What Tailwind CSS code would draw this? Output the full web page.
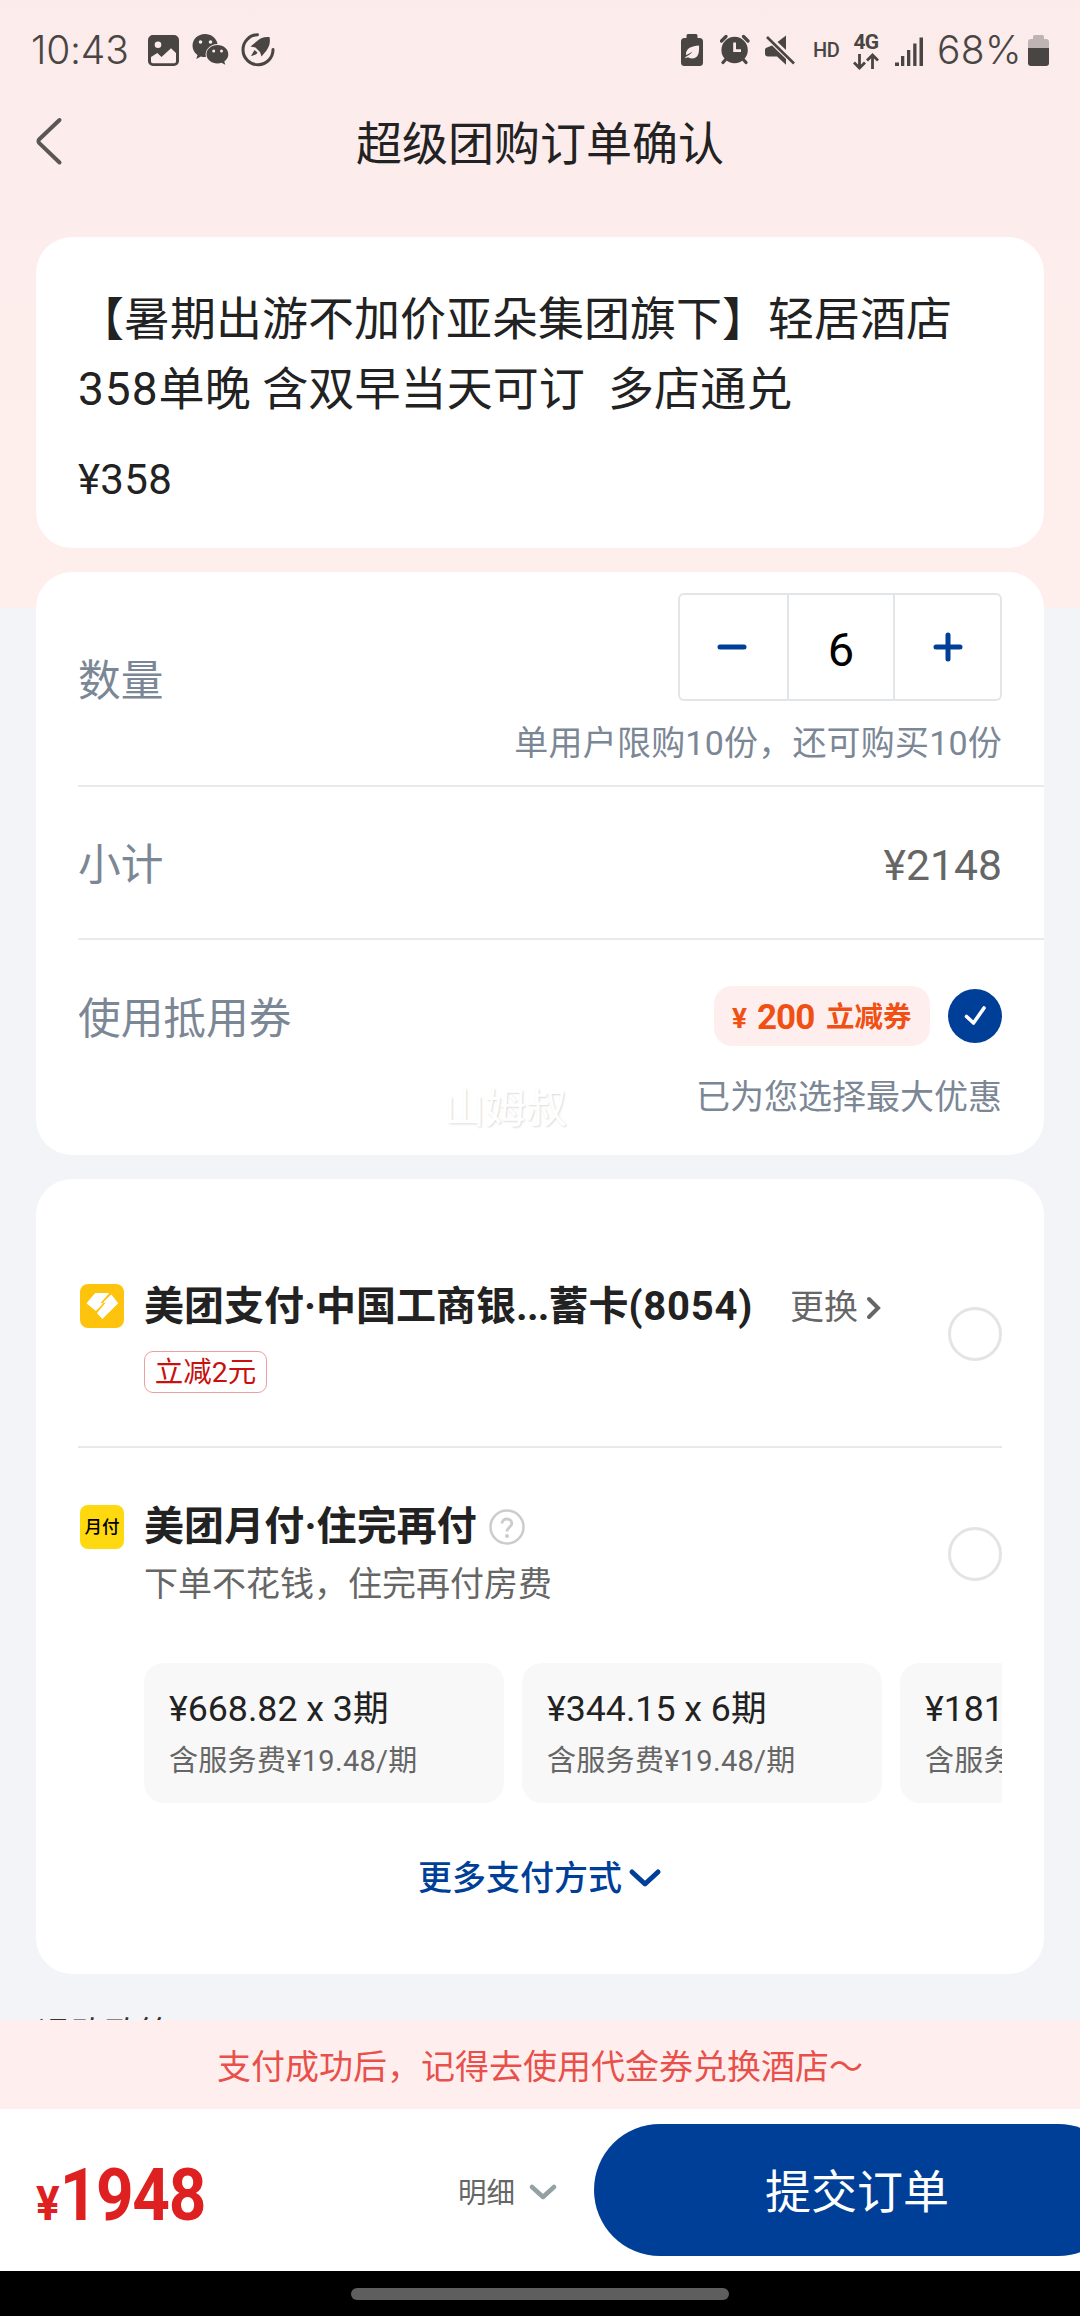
<!DOCTYPE html>
<html lang="zh-CN">
<head>
<meta charset="utf-8">
<title>超级团购订单确认</title>
<script src="https://cdn.jsdelivr.net/npm/@tailwindcss/browser@4"></script>
</head>
<body class="w-[1080px] h-[2316px] overflow-hidden bg-[#f2f4f8] font-['Roboto','Noto_Sans_CJK_SC',sans-serif] text-[#222]">
<div class="flex flex-col h-[2316px]">
  <main class="flex-1 min-h-0 overflow-hidden bg-[linear-gradient(#fcebeb,#feefec)] bg-[length:100%_608px] bg-no-repeat">
    <!-- status bar -->
    <div class="flex items-center h-[100px] pl-[31px] pr-[31px] text-[#494543]">
      <span class="w-[100px] pb-px font-['Inter',sans-serif] text-[39px] leading-[40px] font-[350] tracking-[-0.2px] whitespace-nowrap">10:43</span>
      <svg class="ml-[17px] w-[31px] h-[31px]" viewBox="0 0 31 31"><path fill="currentColor" fill-rule="evenodd" d="M5 0h21a5 5 0 0 1 5 5v21a5 5 0 0 1-5 5H5a5 5 0 0 1-5-5V5a5 5 0 0 1 5-5zM10 6.500a3.300 3.300 0 1 0 0 6.600a3.300 3.300 0 1 0 0-6.600zM3 22v4.500a1.800 1.800 0 0 0 1.800 1.800h21.400a1.800 1.800 0 0 0 1.800-1.800V18l-5-4.700-9.500 8.700-4.200-4z"/></svg>
      <svg class="ml-[13px] w-[37px] h-[32px]" viewBox="192 34 37 32"><path fill="currentColor" d="M205 34c-7 0-12.500 5-12.500 11.700 0 4 2 7 5 9.200l-1.200 4 4.600-2.400c1.500.4 3 .6 5 .5-1.500-6.500 3.500-12.800 11.600-13C216.500 38 211 34 205 34z"/><path fill="currentColor" d="M217.500 45c6 0 10.800 4 10.800 9.200 0 3-1.500 5.500-4 7.300l1 3.300-3.800-2c-1.200.4-2.500.6-4 .6-6 0-11-4-11-9.200s5-9.200 11-9.200z"/><g fill="#fcebeb"><circle cx="200.500" cy="42" r="1.800"/><circle cx="210.500" cy="42" r="1.800"/><circle cx="213.700" cy="51" r="1.500"/><circle cx="221.500" cy="51" r="1.500"/></g></svg>
      <svg class="ml-[12px] w-[34px] h-[34px]" viewBox="241 33 34 34"><path d="M257.500 34.700A15 15 0 1 0 273 49.500" fill="none" stroke="currentColor" stroke-width="3" stroke-linecap="round"/><path fill="currentColor" d="M269.500 37c-6-.5-10 1.500-13 4.500l-6 5 5 1 4.500 4.500 1.500 4.500 5-6c3-4 4-8 3-13.500zM254.500 50l3 2.500c-1 2-3.500 3-6.500 3.500z"/></svg>
      <span class="flex-1"></span>
      <svg class="w-[22px] h-[32px]" viewBox="681 34 22 32"><path fill="currentColor" d="M688 34h8a1.500 1.500 0 0 1 1.500 1.500V38h2a3.500 3.500 0 0 1 3.500 3.500v21a3.500 3.500 0 0 1-3.500 3.500h-15a3.500 3.500 0 0 1-3.500-3.500v-21a3.500 3.500 0 0 1 3.500-3.500h2v-2.500a1.500 1.500 0 0 1 1.500-1.500z"/><path fill="#fcebeb" d="M699 45.500c.5 8-1 13-7 13-2 0-3.500-.8-4-1.200l-3 1 .5-1.300c3-1.500 5-3 7-5.500-3 2-4.500 3-6.500 3.500-.5-7 6-9 13-9.500z"/></svg>
      <svg class="ml-[17px] w-[30px] h-[32px]" viewBox="720 35 30 32"><circle cx="734.600" cy="51" r="13.200" fill="currentColor"/><path stroke="currentColor" stroke-width="3.200" stroke-linecap="round" fill="none" d="M721.500 42l4.500-4.500M743.500 37.500l4.500 4.500M727 59l-4 4.500M742 59l4 4.500"/><path fill="none" stroke="#fcebeb" stroke-width="2.800" d="M734.600 43.500v8.200h6.400"/></svg>
      <svg class="ml-[15px] w-[30px] h-[31px]" viewBox="765 35 30 31"><path fill="currentColor" d="M786 35.500V50l-8.500-8zM765 50a2.500 2.500 0 0 1 2-2.500l5-2 14 13.500v5.700l-9-8.200h-9a3 3 0 0 1-3-3z"/><path stroke="currentColor" stroke-width="2.600" d="M767 37l27 26.500"/></svg>
      <span class="ml-[18px] w-[26px] text-[20px] leading-[20px] font-medium tracking-[-0.5px]">HD</span>
      <span class="ml-[14px] w-[26px] flex flex-col items-center pt-[3px]">
        <span class="text-[21px] leading-[17px] font-bold tracking-[-0.8px]">4G</span>
        <svg class="mt-[2px] w-[26px] h-[17px]" viewBox="0 0 26 17"><path fill="none" stroke="currentColor" stroke-width="2.800" d="M6.500 1v13.500M1 9.500l5.500 5.500L12 9.500M19.500 16V2.500M14 7.500L19.500 2 25 7.500"/></svg>
      </span>
      <svg class="ml-[16px] w-[28px] h-[29px] mt-[3px]" viewBox="895 37 28 29"><path fill="currentColor" d="M895 62.500h4v3.500h-4zM901 56h3.300v10H901zM907 50h3.300v16H907zM913.200 43.500h3.300V66h-3.300zM919.500 37.500h3.500V66h-3.500z"/></svg>
      <span class="ml-[14px] w-[88px] pb-px font-['Inter',sans-serif] text-[39px] leading-[40px] font-[350] tracking-[0.3px] whitespace-nowrap">68%</span>
      <svg class="ml-[3px] w-[21px] h-[31px]" viewBox="1028 34 21 31"><path fill="#beb4b3" d="M1034.500 34h8a1.500 1.500 0 0 1 1.500 1.500V38h2a3 3 0 0 1 3 3v7h-21v-7a3 3 0 0 1 3-3h2v-2.500a1.500 1.500 0 0 1 1.500-1.500z"/><path fill="currentColor" d="M1028 47h21v15a3 3 0 0 1-3 3h-15a3 3 0 0 1-3-3z"/></svg>
    </div>
    <!-- title bar -->
    <header class="grid grid-cols-[100px_1fr_100px] items-center h-[88px]">
      <svg class="ml-[34px] -mt-[6px] w-[30px] h-[50px]" viewBox="34 116 30 50"><path d="M59.500 120L39.300 139.300a2.600 2.600 0 0 0 0 3.800L59.500 162.500" fill="none" stroke="#5a5656" stroke-width="4" stroke-linecap="round"/></svg>
      <h1 class="pb-px text-center text-[46px] leading-[60px] text-[#222]">超级团购订单确认</h1>
    </header>

    <!-- product -->
    <section class="mx-9 mt-[49px] h-[311px] rounded-[36px] bg-white px-[42px] pt-[47px]">
      <h2 class="text-[46px] leading-[70px] whitespace-nowrap">【暑期出游不加价亚朵集团旗下】轻居酒店<br><span class="tracking-[1px]">358</span><span class="tracking-[0.1px]">单晚 含双早当天可订&nbsp; 多店通兑</span></h2>
      <p class="mt-[34px] text-[42px] leading-[44px] tracking-[0.3px]">¥358</p>
    </section>

    <!-- order -->
    <section class="relative mx-9 mt-6 h-[583px] rounded-[36px] bg-white pl-[42px] text-[#7c8796]">
      <div class="flex h-[215px] items-center justify-between border-b-2 border-[#e8eaec] pr-[42px]">
        <span class="text-[42.700px] leading-[50px] pt-[5px]">数量</span>
        <div class="flex flex-col items-end h-full pt-[21px]">
          <div class="grid grid-cols-[107px_108px_105px] w-[324px] h-[108px] rounded-[6px] border-2 border-[#e3e6e8]">
            <span class="flex items-center justify-center pr-[4px]"><svg class="w-[30px] h-[30px]" viewBox="0 0 30 30"><path d="M3 15h24" stroke="#003f98" stroke-width="5" stroke-linecap="round"/></svg></span>
            <span class="flex items-center justify-center border-x-2 border-[#e3e6e8] text-[47px] leading-[50px] text-black pt-[5px]">6</span>
            <span class="flex items-center justify-center"><svg class="w-[30px] h-[30px]" viewBox="0 0 30 30"><path d="M3 15h24M15 3v24" stroke="#003f98" stroke-width="5" stroke-linecap="round"/></svg></span>
          </div>
          <p class="mt-[20px] text-[34px] leading-[44px] tracking-[0.2px]">单用户限购10份，还可购买10份</p>
        </div>
      </div>
      <div class="flex h-[153px] items-center justify-between border-b-2 border-[#e8eaec] pr-[42px] text-[42.700px] leading-[50px]">
        <span class="pt-[5px]">小计</span><span class="pt-[4px] text-[#666]">¥2148</span>
      </div>
      <div class="flex justify-between pr-[42px]">
        <span class="mt-[54px] text-[42.700px] leading-[50px]">使用抵用券</span>
        <div class="flex flex-col items-end pt-[46px]">
          <div class="flex items-center gap-[18px]">
            <div class="flex items-center w-[216px] h-[60px] rounded-[18px] bg-[#feefee] pl-[18px] text-[#f05014] font-bold whitespace-nowrap">
              <span class="text-[28px] leading-[36px] w-[25px] pt-[5px]">¥</span><span class="text-[35px] leading-[36px] w-[69px] pt-[3px] tracking-[-1px]">200</span><span class="pt-[3px] text-[28.500px] leading-[36px]">立减券</span>
            </div>
            <svg class="w-[54px] h-[54px]" viewBox="0 0 54 54"><circle cx="27" cy="27" r="27" fill="#003f98"/><path d="M18.500 27.500l7 6.500L36 19" fill="none" stroke="#fff" stroke-width="3.600" stroke-linecap="round" stroke-linejoin="round"/></svg>
          </div>
          <p class="mt-[29px] text-[34px] leading-[44px]">已为您选择最大优惠</p>
        </div>
      </div>
      <span class="absolute left-[408px] top-[509px] text-[41px] leading-[56px] text-white [text-shadow:1px_1px_2px_#dadada]">山姆叔</span>
    </section>

    <!-- payment -->
    <section class="mx-9 mt-6 h-[795px] rounded-[36px] bg-white px-[42px]">
      <div class="flex h-[269px] border-b-2 border-[#e9e9e9] pt-[101px]">
        <svg class="ml-[2px] mt-[4px] w-[44px] h-[44px]" viewBox="80 1284 44 44"><rect x="80" y="1284" width="44" height="44" rx="8" fill="#fec40d"/><path fill="#fff" stroke="#fff" stroke-width="1" stroke-linejoin="round" d="M87 1303.300L95.200 1293.500H108.500L99.500 1303.600H102.500L96 1310.500zM111.300 1295L117.700 1303.300 102.300 1318.500 97.500 1313 106.500 1302.200H103.700z"/></svg>
        <div class="ml-[20px] flex flex-col items-start">
          <div class="flex items-center h-[54px]">
            <span class="w-[646px] text-[40px] leading-[52px] font-bold whitespace-nowrap">美团支付·中国工商银<span class="tracking-[-0.8px]">...</span>蓄卡<span class="tracking-[0.8px]">(8054)</span></span>
            <span class="text-[34px] leading-[44px] text-[#666] whitespace-nowrap">更换</span>
            <svg class="ml-[8px] mt-[2px] w-[16px] h-[24px]" viewBox="0 0 16 24"><path d="M3 3l9 9-9 9" fill="none" stroke="#666" stroke-width="4" stroke-linecap="round"/></svg>
          </div>
          <span class="mt-[17px] flex items-center justify-center w-[123px] h-[42px] rounded-[9px] border border-[#eba0a0] pt-[2px] text-[28.500px] leading-[38px] text-[#c8100c]">立减2元</span>
        </div>
        <span class="ml-auto mt-[27px] w-[54px] h-[54px] rounded-full border-[3px] border-[#e4e4e4]"></span>
      </div>
      <div class="flex pt-[52px]">
        <span class="ml-[2px] mt-[5px] flex items-center justify-center w-[44px] h-[44px] rounded-[8px] bg-[#fed90f] text-[17.500px] leading-[20px] font-medium text-black">月付</span>
        <div class="ml-[20px]">
          <div class="flex items-center h-[54px]">
            <span class="text-[40px] leading-[52px] font-bold tracking-[0.1px]">美团月付·住完再付</span>
            <svg class="ml-[12px] w-[36px] h-[36px]" viewBox="0 0 36 36"><circle cx="18" cy="18" r="16.500" fill="none" stroke="#ccc" stroke-width="2.500"/><path d="M13 14.500c0-6 9.800-6 9.800 0 0 3.500-4.800 3.800-4.800 8" fill="none" stroke="#ccc" stroke-width="2.800"/><circle cx="18" cy="27" r="2" fill="#ccc"/></svg>
          </div>
          <p class="mt-[8px] text-[34px] leading-[44px] text-[#666]">下单不花钱，住完再付房费</p>
        </div>
        <span class="ml-auto mt-[27px] w-[54px] h-[54px] rounded-full border-[3px] border-[#e4e4e4]"></span>
      </div>
      <div class="ml-[66px] mt-[57px] flex gap-[18px] overflow-hidden whitespace-nowrap">
        <div class="shrink-0 w-[360px] h-[140px] rounded-[20px] bg-[#f8f8f8] pl-[25px] pt-[23px]"><p class="text-[35.700px] leading-[46px]">¥668.82 x 3期</p><p class="mt-[9px] text-[29px] leading-[40px] tracking-[0.3px] text-[#666]">含服务费¥19.48/期</p></div>
        <div class="shrink-0 w-[360px] h-[140px] rounded-[20px] bg-[#f8f8f8] pl-[25px] pt-[23px]"><p class="text-[35.700px] leading-[46px]">¥344.15 x 6期</p><p class="mt-[9px] text-[29px] leading-[40px] tracking-[0.3px] text-[#666]">含服务费¥19.48/期</p></div>
        <div class="shrink-0 w-[360px] h-[140px] rounded-[20px] bg-[#f8f8f8] pl-[25px] pt-[23px]"><p class="text-[35.700px] leading-[46px]">¥181.82 x 12期</p><p class="mt-[9px] text-[29px] leading-[40px] tracking-[0.3px] text-[#666]">含服务费¥19.48/期</p></div>
      </div>
      <div class="mt-[53px] flex items-center justify-center text-[#003f98]">
        <span class="text-[34px] leading-[44px] font-medium">更多支付方式</span>
        <svg class="ml-[6px] mt-[2px] w-[34px] h-[22px]" viewBox="0 0 34 22"><path d="M4 4l13 12L30 4" fill="none" stroke="currentColor" stroke-width="5" stroke-linecap="round" stroke-linejoin="round"/></svg>
      </div>
    </section>
    <p class="ml-[37px] mt-[35px] text-[34px] leading-[50px] text-[#333]">退改政策</p>
  </main>

  <!-- footer -->
  <div class="flex items-center justify-center h-[89px] bg-[#feefee] pt-[4px] text-[34px] leading-[44px] text-[#e9504b]">支付成功后，记得去使用代金券兑换酒店～</div>
  <footer class="flex items-center h-[162px] bg-white overflow-hidden">
    <div class="ml-[36px] shrink-0 w-[422px] pt-[18px] text-[#df2020] font-bold leading-[80px]"><div class="flex items-baseline origin-left scale-x-[0.9]"><span class="text-[49px]">¥</span><span class="text-[73px] tracking-[-1.500px]">1948</span></div></div>
    <span class="shrink-0 w-[58px] pt-[7px] text-[28.500px] leading-[40px] text-[#666]">明细</span>
    <svg class="shrink-0 ml-[12px] mt-[6px] w-[30px] h-[18px]" viewBox="0 0 28 18"><path d="M3 3l11 10L25 3" fill="none" stroke="#94a1a3" stroke-width="4.500" stroke-linecap="round" stroke-linejoin="round"/></svg>
    <button class="ml-[36px] shrink-0 w-[530px] h-[132px] rounded-full bg-[#003f98] pt-[3px] pr-[4px] text-[46px] leading-[60px] text-white">提交订单</button>
  </footer>
  <div class="flex justify-center h-[45px] bg-black pt-[17px]"><span class="w-[378px] h-[12px] rounded-full bg-[#5e5e5e]"></span></div>
</div>
</body>
</html>
